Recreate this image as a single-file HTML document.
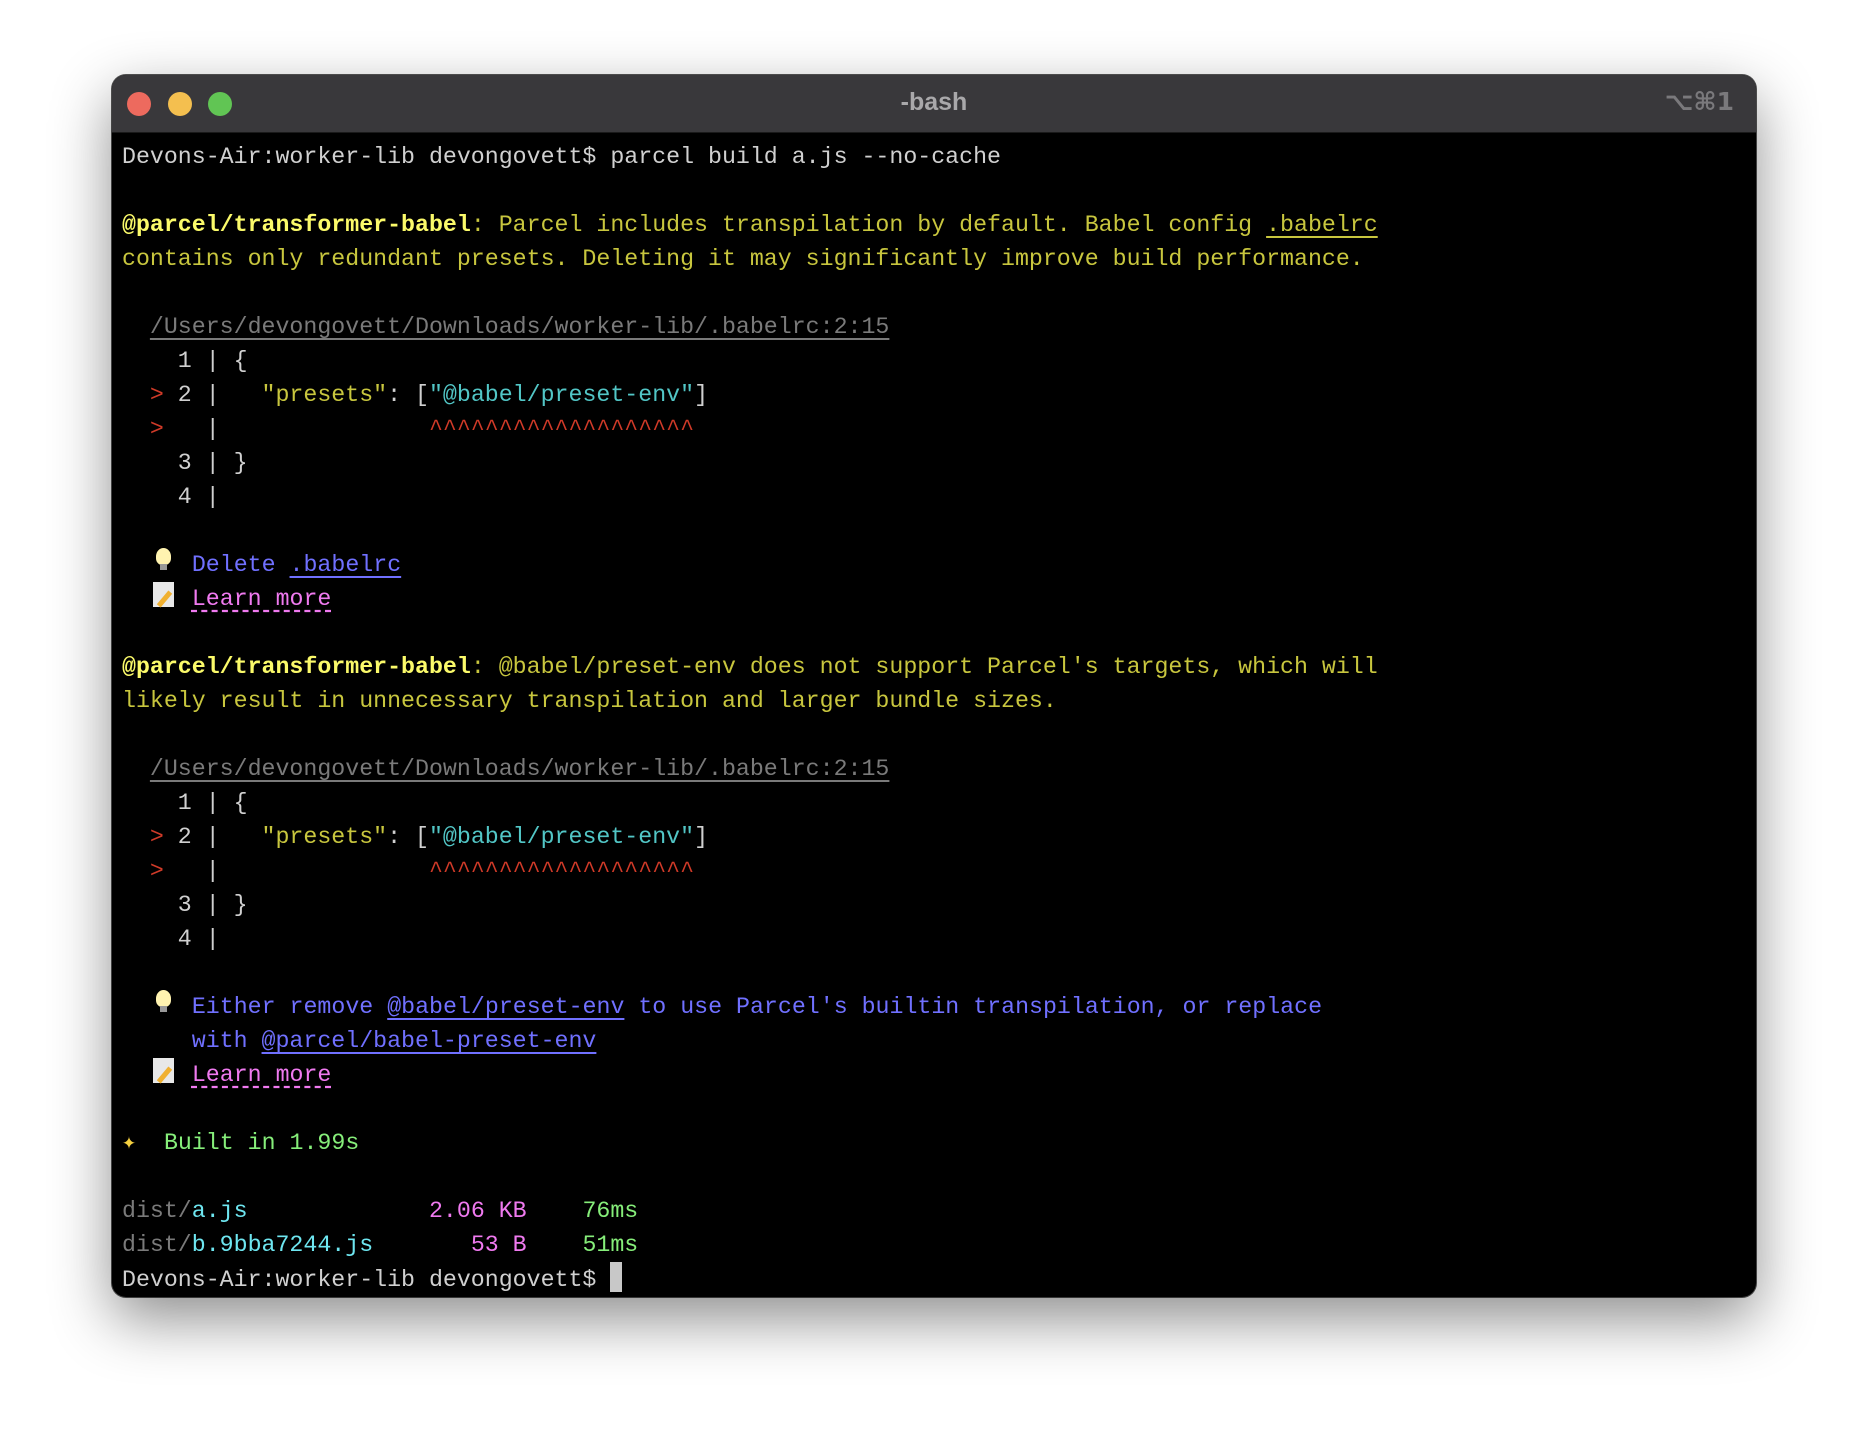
<!DOCTYPE html>
<html><head><meta charset="utf-8"><style>
html,body{margin:0;padding:0;background:#fff;width:1868px;height:1446px;overflow:hidden}
.win{position:absolute;left:112px;top:75px;width:1644px;height:1222px;border-radius:14px;background:#000;box-shadow:0 22px 60px rgba(0,0,0,.45),0 0 0 1px #555;overflow:hidden}
.tb{position:absolute;left:0;top:0;right:0;height:57px;background:#39383b;border-bottom:1px solid #1a1a1a}
.dot{position:absolute;top:17px;width:24px;height:24px;border-radius:50%}
.title{position:absolute;left:0;right:0;top:13px;text-align:center;font:bold 25px "Liberation Sans",sans-serif;color:#a9a8aa}
.sc{position:absolute;right:22px;top:12px;font:bold 25px "DejaVu Sans",sans-serif;color:#7a797c}
pre{position:absolute;left:10px;top:65px;margin:0;font:23.25px/34px "Liberation Mono",monospace;color:#d0d0d0;white-space:pre}
.y{color:#c8c63e}.Y{color:#fbfa6a;font-weight:bold}.g{color:#7a7a7a}.c{color:#52c6c6}.r{color:#d03a28}
.b{color:#7070ff}.m{color:#f07af0}.G{color:#86ee7a}.C{color:#6ee6f0}.w{color:#ddd}
.u{text-decoration:underline;text-underline-offset:5px}
.d{text-decoration:underline dashed;text-underline-offset:5px}
.em{display:inline-block;width:28px;position:relative;height:1px}
.bulb::before{content:"";position:absolute;left:6px;top:-22px;width:15px;height:17px;border-radius:50% 50% 40% 40%;background:#fff3b0}
.bulb::after{content:"";position:absolute;left:10px;top:-6px;width:7px;height:6px;background:#999}
.memo::before{content:"";position:absolute;left:3px;top:-22px;width:21px;height:25px;background:#e8e8e8}
.memo::after{content:"";position:absolute;left:12px;top:-14px;width:5px;height:18px;background:#f0b030;transform:rotate(40deg)}
.spk{color:#f5d040;display:inline-block;width:28px}
.cur{display:inline-block;width:12px;height:30px;background:#c8c8c8;vertical-align:-6px}
</style></head><body>
<div class="win">
<div class="tb"><div class="dot" style="left:15px;background:#ed6a5e"></div><div class="dot" style="left:56px;background:#f4bf4f"></div><div class="dot" style="left:96px;background:#61c554"></div>
<div class="title">-bash</div><div class="sc">⌥⌘1</div></div>
<pre>Devons-Air:worker-lib devongovett$ parcel build a.js --no-cache

<span class="Y">@parcel/transformer-babel</span><span class="y">: Parcel includes transpilation by default. Babel config <span class="u">.babelrc</span>
contains only redundant presets. Deleting it may significantly improve build performance.</span>

  <span class="g u">/Users/devongovett/Downloads/worker-lib/.babelrc:2:15</span>
    1 | {
  <span class="r">&gt;</span> 2 |   <span class="y">"presets"</span>: [<span class="c">"@babel/preset-env"</span>]
  <span class="r">&gt;</span>   |               <span class="r">^^^^^^^^^^^^^^^^^^^</span>
    3 | }
    4 |

  <span class="em bulb"></span> <span class="b">Delete <span class="u">.babelrc</span></span>
  <span class="em memo"></span> <span class="m d">Learn more</span>

<span class="Y">@parcel/transformer-babel</span><span class="y">: @babel/preset-env does not support Parcel's targets, which will
likely result in unnecessary transpilation and larger bundle sizes.</span>

  <span class="g u">/Users/devongovett/Downloads/worker-lib/.babelrc:2:15</span>
    1 | {
  <span class="r">&gt;</span> 2 |   <span class="y">"presets"</span>: [<span class="c">"@babel/preset-env"</span>]
  <span class="r">&gt;</span>   |               <span class="r">^^^^^^^^^^^^^^^^^^^</span>
    3 | }
    4 |

  <span class="em bulb"></span> <span class="b">Either remove <span class="u">@babel/preset-env</span> to use Parcel's builtin transpilation, or replace
     with <span class="u">@parcel/babel-preset-env</span></span>
  <span class="em memo"></span> <span class="m d">Learn more</span>

<span class="spk">✦</span> <span class="G">Built in 1.99s</span>

<span class="g">dist/</span><span class="C">a.js</span>             <span class="m">2.06 KB</span>    <span class="G">76ms</span>
<span class="g">dist/</span><span class="C">b.9bba7244.js</span>       <span class="m">53 B</span>    <span class="G">51ms</span>
Devons-Air:worker-lib devongovett$ <span class="cur"></span></pre>
</div>
</body></html>
